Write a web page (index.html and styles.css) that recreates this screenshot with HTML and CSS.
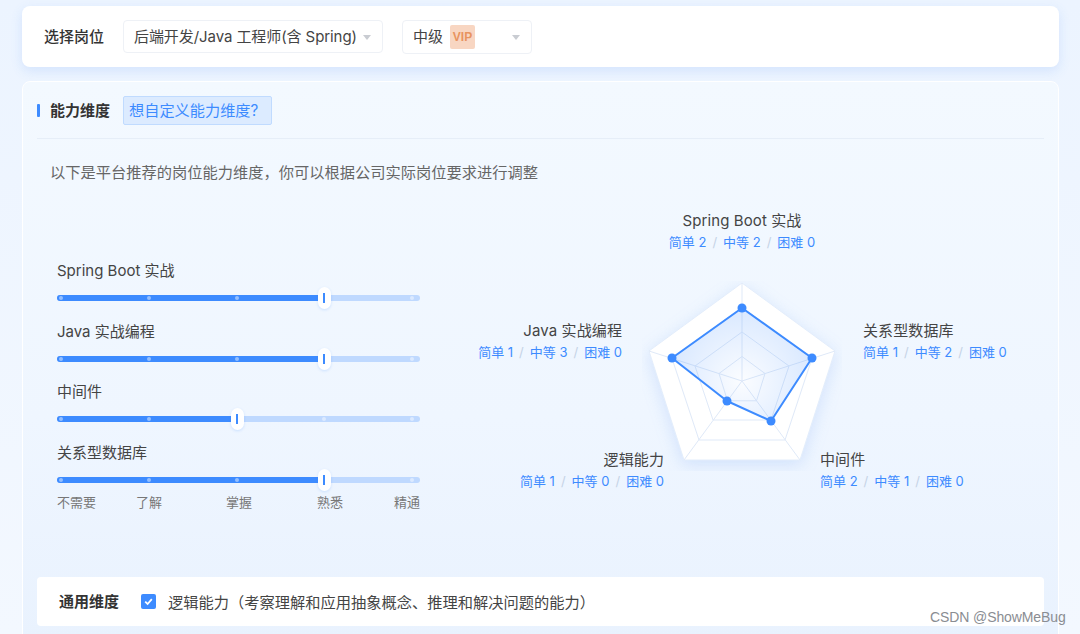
FILE: index.html
```html
<!DOCTYPE html>
<html lang="zh-CN">
<head>
    <meta charset="UTF-8">
    <title>选择岗位</title>
    <link rel="stylesheet" href="styles.css">
</head>
<body>
    <div class="page">
        <div class="job-card">
            <span class="job-label">选择岗位</span>
            <div class="select select-job">
                <span>后端开发/Java 工程师(含 Spring)</span>
                <i class="caret"></i>
            </div>
            <div class="select select-level">
                <span>中级</span>
                <span class="vip">VIP</span>
                <i class="caret"></i>
            </div>
        </div>

        <div class="panel">
            <div class="panel-head">
                <i class="head-bar"></i>
                <span class="head-title">能力维度</span>
                <span class="head-chip">想自定义能力维度?</span>
            </div>
            <p class="desc">以下是平台推荐的岗位能力维度，你可以根据公司实际岗位要求进行调整</p>

            <div class="panel-body">
                <div class="sliders">
                    <div class="slider-row">
                        <div class="slider-name">Spring Boot 实战</div>
                        <div class="slider"><div class="slider-fill level-3"></div><i class="dot d0"></i><i class="dot d1"></i><i class="dot d2"></i><i class="dot d3"></i><i class="dot d4"></i><i class="thumb at-3"></i></div>
                    </div>
                    <div class="slider-row">
                        <div class="slider-name">Java 实战编程</div>
                        <div class="slider"><div class="slider-fill level-3"></div><i class="dot d0"></i><i class="dot d1"></i><i class="dot d2"></i><i class="dot d3"></i><i class="dot d4"></i><i class="thumb at-3"></i></div>
                    </div>
                    <div class="slider-row">
                        <div class="slider-name">中间件</div>
                        <div class="slider"><div class="slider-fill level-2"></div><i class="dot d0"></i><i class="dot d1"></i><i class="dot d2"></i><i class="dot d3"></i><i class="dot d4"></i><i class="thumb at-2"></i></div>
                    </div>
                    <div class="slider-row">
                        <div class="slider-name">关系型数据库</div>
                        <div class="slider"><div class="slider-fill level-3"></div><i class="dot d0"></i><i class="dot d1"></i><i class="dot d2"></i><i class="dot d3"></i><i class="dot d4"></i><i class="thumb at-3"></i></div>
                    </div>
                    <div class="slider-marks">
                        <span>不需要</span><span>了解</span><span>掌握</span><span>熟悉</span><span class="mark-last">精通</span>
                    </div>
                </div>

                <div class="radar">
                    <svg class="radar-svg" width="200" height="190" viewBox="0 0 200 190">
                        <defs>
                            <radialGradient id="areaFill" gradientUnits="userSpaceOnUse" cx="100" cy="100" r="75">
                                <stop offset="0" stop-color="#3d8bff" stop-opacity="0.02"/>
                                <stop offset="1" stop-color="#3d8bff" stop-opacity="0.2"/>
                            </radialGradient>
                        </defs>
                        <polygon class="radar-base" points="100,2 193,70 158,179 42,179 7,70"/>
                        <g class="radar-grid">
                            <polygon points="100,26.5 170,77.4 143,159 57,159 30,77.4"/>
                            <polygon points="100,51 147,85 129,139 71,139 53,85"/>
                            <polygon points="100,75.5 123,92.5 114.5,119.8 85.5,119.8 77,92.5"/>
                            <line x1="100" y1="100" x2="100" y2="2"/>
                            <line x1="100" y1="100" x2="193" y2="70"/>
                            <line x1="100" y1="100" x2="158" y2="179"/>
                            <line x1="100" y1="100" x2="42" y2="179"/>
                            <line x1="100" y1="100" x2="7" y2="70"/>
                        </g>
                        <polygon class="radar-area" fill="url(#areaFill)" points="100,27 170,77 129,140 85,120 30,77"/>
                        <g class="radar-points">
                            <circle cx="100" cy="27" r="4.5"/>
                            <circle cx="170" cy="77" r="4.5"/>
                            <circle cx="129" cy="140" r="4.5"/>
                            <circle cx="85" cy="120" r="4.5"/>
                            <circle cx="30" cy="77" r="4.5"/>
                        </g>
                    </svg>

                    <div class="tag tag-top">
                        <div class="tag-name">Spring Boot 实战</div>
                        <div class="tag-count">简单 2<em>/</em>中等 2<em>/</em>困难 0</div>
                    </div>
                    <div class="tag tag-right">
                        <div class="tag-name">关系型数据库</div>
                        <div class="tag-count">简单 1<em>/</em>中等 2<em>/</em>困难 0</div>
                    </div>
                    <div class="tag tag-br">
                        <div class="tag-name">中间件</div>
                        <div class="tag-count">简单 2<em>/</em>中等 1<em>/</em>困难 0</div>
                    </div>
                    <div class="tag tag-bl">
                        <div class="tag-name">逻辑能力</div>
                        <div class="tag-count">简单 1<em>/</em>中等 0<em>/</em>困难 0</div>
                    </div>
                    <div class="tag tag-left">
                        <div class="tag-name">Java 实战编程</div>
                        <div class="tag-count">简单 1<em>/</em>中等 3<em>/</em>困难 0</div>
                    </div>
                </div>
            </div>

            <div class="common-row">
                <span class="common-title">通用维度</span>
                <span class="check">
                    <svg width="11" height="11" viewBox="0 0 11 11"><path d="M2.2 5.6 L4.6 8 L8.8 3.2" fill="none" stroke="#fff" stroke-width="1.8"/></svg>
                </span>
                <span class="common-text">逻辑能力（考察理解和应用抽象概念、推理和解决问题的能力）</span>
            </div>
        </div>
    </div>
    <div class="watermark">CSDN @ShowMeBug</div>
</body>
</html>
```

FILE: styles.css
```css
html, body {
    margin: 0;
    height: 634px;
    overflow: hidden;
}
body {
    font-family: 'Inter', 'Noto Sans CJK SC', sans-serif;
    color: #333;
    background: linear-gradient(to bottom, #ecf4ff, #f3f8ff);
    position: relative;
    text-spacing-trim: space-all;
}
.page {
    padding: 6px 21px 0 22px;
}

/* top card */
.job-card {
    display: flex;
    align-items: center;
    height: 61px;
    padding-left: 22px;
    background: #fff;
    border-radius: 8px;
    box-shadow: 0 4px 12px rgba(80, 140, 240, 0.16);
}
.job-label {
    font-size: 15px;
    font-weight: 500;
    color: #333;
    margin-right: 19px;
    margin-bottom: 2px;
}
.select {
    display: flex;
    align-items: center;
    box-sizing: border-box;
    background: #fff;
    border: 1px solid #eef1f6;
    border-radius: 4px;
    font-size: 15px;
    color: #444;
    position: relative;
}
.select-job {
    width: 260px;
    height: 33px;
    padding-left: 10px;
    padding-bottom: 2px;
    margin-right: 19px;
    letter-spacing: -0.08px;
}
.select-level {
    width: 130px;
    height: 34px;
    padding-left: 10px;
}
.select-level span:first-child {
    margin-bottom: 2px;
}
.caret {
    position: absolute;
    right: 11px;
    top: 50%;
    margin-top: -2px;
    border-left: 4px solid transparent;
    border-right: 4px solid transparent;
    border-top: 5px solid #c9ccd2;
}
.vip {
    width: 25px;
    height: 24px;
    line-height: 24px;
    margin-left: 7px;
    text-align: center;
    background: #f8d6c2;
    border-radius: 2px;
    color: #e8935f;
    font-family: 'Liberation Sans Narrow', 'Liberation Sans', sans-serif;
    font-size: 12px;
    font-weight: 700;
}

/* panel */
.panel {
    box-sizing: border-box;
    height: 560px;
    margin-top: 14px;
    padding: 0 14px;
    background: linear-gradient(to bottom, #f3f9ff, #eff6ff 60%, #e9f2fe);
    border: 1px solid #fff;
    border-radius: 8px 8px 0 0;
}
.panel-head {
    display: flex;
    align-items: center;
    height: 56px;
    border-bottom: 1px solid #e6eef8;
}
.head-bar {
    width: 3px;
    height: 13px;
    background: #3d8bff;
    border-radius: 1px;
    margin-right: 10px;
}
.head-title {
    font-size: 15px;
    font-weight: 700;
    color: #333;
    margin-right: 13px;
    margin-bottom: 2px;
}
.head-chip {
    box-sizing: border-box;
    width: 149px;
    height: 29px;
    line-height: 27px;
    padding-left: 5px;
    font-size: 15.2px;
    white-space: nowrap;
    color: #3d8bff;
    background: #dcebff;
    border: 1px solid #c0dbff;
    border-radius: 2px;
}
.desc {
    margin: 0;
    padding: 23px 0 0 13px;
    height: 43px;
    line-height: 22px;
    font-size: 15.25px;
    color: #666;
}

.panel-body {
    display: flex;
    height: 372px;
}

/* sliders */
.sliders {
    width: 363px;
    margin-left: 20px;
    padding-top: 55px;
    flex-shrink: 0;
}
.slider-row {
    height: 60.7px;
}
.slider-name {
    font-size: 15px;
    line-height: 22px;
    color: #444;
    padding-bottom: 13px;
}
.slider {
    position: relative;
    height: 6px;
    border-radius: 3px;
    background: #bfd9ff;
}
.slider-fill {
    height: 6px;
    border-radius: 3px;
    background: #3d8bff;
}
.level-3 { width: 267px; }
.level-2 { width: 180px; }
.dot {
    position: absolute;
    top: 1px;
    width: 4px;
    height: 4px;
    border-radius: 50%;
    background: rgba(255, 255, 255, 0.45);
}
.d0 { left: 2px; }
.d1 { left: 90px; }
.d2 { left: 178px; }
.d3 { left: 265px; }
.d4 { left: 353px; }
.thumb {
    position: absolute;
    top: -8px;
    box-sizing: border-box;
    width: 13px;
    height: 22px;
    border-radius: 7px;
    background: #fff;
    box-shadow: 0 1px 3px rgba(61, 139, 255, 0.2);
}
.thumb::after {
    content: "";
    position: absolute;
    left: 5px;
    top: 6px;
    width: 2px;
    height: 10px;
    background: #3d8bff;
}
.at-3 { left: 261px; }
.at-2 { left: 174px; }
.slider-marks {
    display: grid;
    grid-template-columns: 79px 90px 91px 40px 63px;
    margin-top: -10px;
    font-size: 13px;
    line-height: 18px;
    color: #777;
}
.mark-last {
    text-align: right;
}

/* radar, labels sit on a free canvas around the chart */
.radar {
    position: relative;
    flex: 1;
}
.radar-svg {
    position: absolute;
    left: 222px;
    top: 76px;
}
.radar-base {
    fill: #fff;
    stroke: #e3edfb;
    stroke-width: 1;
    filter: drop-shadow(0 4px 8px rgba(80, 140, 240, 0.18));
}
.radar-grid polygon, .radar-grid line {
    fill: none;
    stroke: #dfe9f8;
    stroke-width: 1;
}
.radar-area {
    stroke: #3d8bff;
    stroke-width: 2;
    stroke-linejoin: round;
}
.radar-points circle {
    fill: #3d8bff;
}
.tag {
    position: absolute;
    white-space: nowrap;
}
.tag-name {
    font-size: 15px;
    line-height: 20px;
    color: #444;
    letter-spacing: 0.1px;
}
.tag-count {
    font-size: 13px;
    line-height: 20px;
    margin-top: 1px;
    color: #3d8bff;
}
.tag-count em {
    font-style: normal;
    color: #c5d3e6;
    margin: 0 6px;
}
.tag-top { left: 185px; width: 274px; text-align: center; top: 6px; }
.tag-right { left: 443px; top: 116px; }
.tag-br { left: 400px; top: 245px; }
.tag-bl { right: 380px; top: 245px; text-align: right; }
.tag-left { right: 422px; top: 116px; text-align: right; }

/* bottom row */
.common-row {
    display: flex;
    align-items: center;
    height: 49px;
    padding-left: 22px;
    background: #fff;
    border-radius: 4px;
}
.common-title {
    font-size: 15px;
    font-weight: 700;
    color: #333;
    margin-right: 22px;
    margin-bottom: 2px;
}
.check {
    display: flex;
    align-items: center;
    justify-content: center;
    width: 15px;
    height: 15px;
    background: #3d8bff;
    border-radius: 2px;
    margin-right: 11px;
}
.common-text {
    font-size: 15.25px;
    color: #444;
    margin-left: 1px;
    margin-bottom: 2px;
}

.watermark {
    position: absolute;
    left: 930px;
    top: 608px;
    font-family: 'Liberation Sans', sans-serif;
    font-size: 14px;
    line-height: 18px;
    letter-spacing: -0.1px;
    color: #8a8d92;
}
```
